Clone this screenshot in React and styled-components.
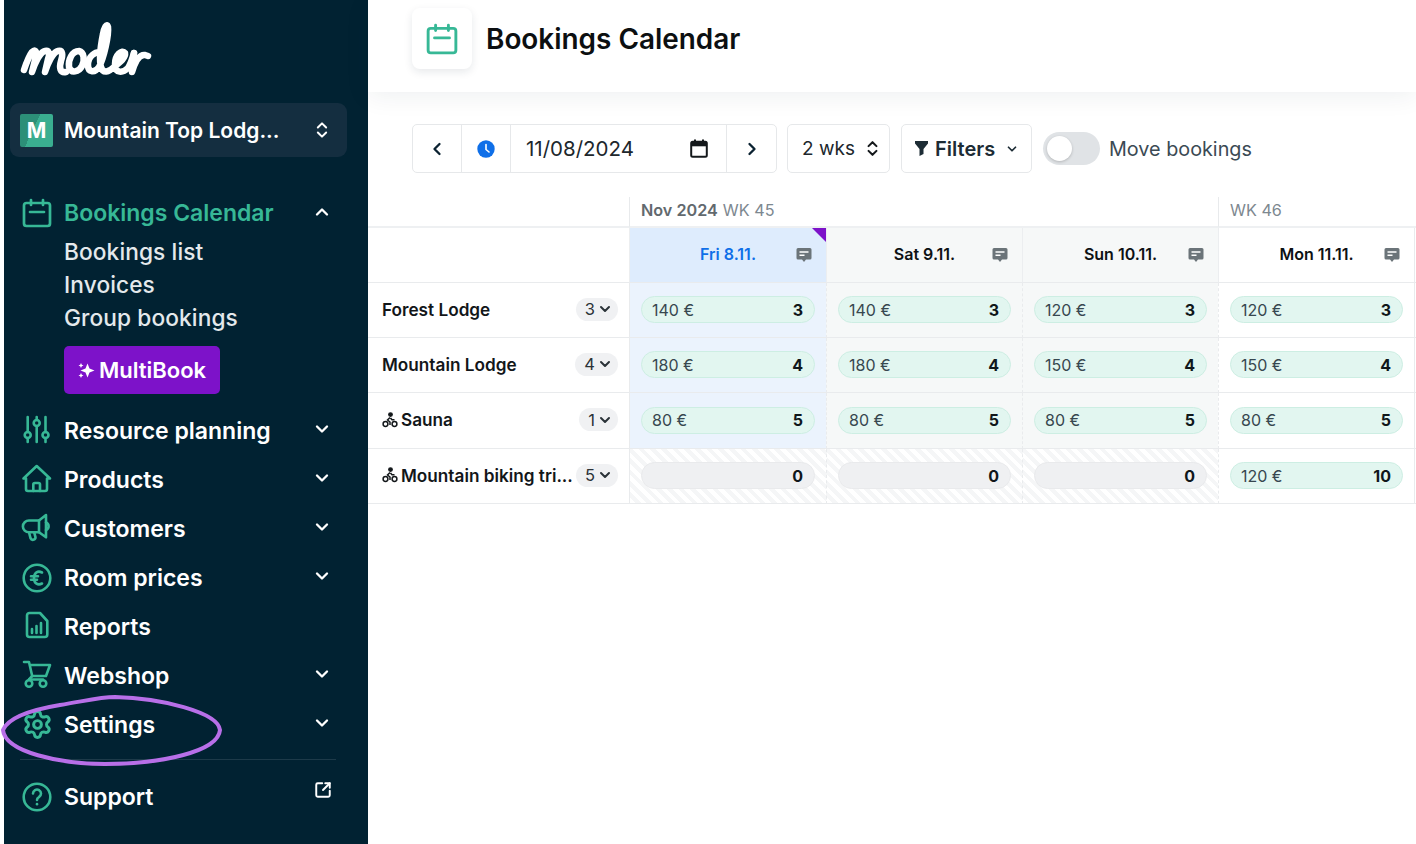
import React from "react";
import styled, { createGlobalStyle } from "styled-components";
import {
  ChevronUp, ChevronDown, ChevronLeft, ChevronRight, ChevronsUpDown, Settings, CircleHelp, SquareArrowOutUpRight,
} from "lucide-react";

const FONT = `"Inter", "Open Sans", "Liberation Sans", sans-serif`;
const GREEN = "#37b896";

const Global = createGlobalStyle`
  html, body { margin: 0; padding: 0; background: #fff; }
  body { font-family: ${FONT}; }
  * { box-sizing: border-box; }
`;

const Page = styled.div`
  position: relative;
  display: flex;
  width: 1416px;
  height: 844px;
  overflow: hidden;
  padding-left: 4px;
  background: #fff;
`;

const Sidebar = styled.aside`
  flex: 0 0 364px;
  height: 844px;
  background: #012232;
  padding: 20px 6px 0;
  display: flex;
  flex-direction: column;
  color: #fff;
`;

const LogoBox = styled.svg`
  display: block;
  margin-left: 9px;
  width: 136px;
  height: 60px;
  flex: none;
`;

const Switcher = styled.div`
  margin-top: 23px;
  height: 54px;
  width: 337px;
  border-radius: 9px;
  background: #142e40;
  display: flex;
  align-items: center;
  padding: 0 15px 0 10px;
  flex: none;
`;

const Badge = styled.div`
  width: 33px;
  height: 33px;
  border-radius: 2px;
  background: linear-gradient(115deg, #2c8f78 0 42%, #3aae90 42%);
  color: #fff;
  font-weight: 700;
  font-size: 21px;
  display: flex;
  align-items: center;
  justify-content: center;
  flex: none;
`;

const SwitcherName = styled.div`
  flex: 1;
  margin-left: 11px;
  font-size: 21px;
  font-weight: 600;
  white-space: nowrap;
`;

const Nav = styled.nav`
  margin-top: 31px;
  display: flex;
  flex-direction: column;
`;

const Item = styled.div`
  height: ${(p) => (p.$active ? 50 : 49)}px;
  display: flex;
  align-items: center;
  padding: 0 30px 0 10px;
  font-size: 23px;
  font-weight: 600;
  color: ${(p) => (p.$active ? GREEN : "#fff")};
  white-space: nowrap;
`;

const ItemIcon = styled.span`
  width: 34px;
  height: 34px;
  display: flex;
  align-items: center;
  justify-content: center;
  color: ${GREEN};
  flex: none;
`;

const ItemLabel = styled.span`
  flex: 1;
  margin-left: 10px;
`;

const Caret = styled.span`
  color: #fff;
  display: flex;
  margin-top: ${(p) => (p.$raised ? -13 : -3)}px;
`;

const SubList = styled.div`
  display: flex;
  flex-direction: column;
  padding-left: 54px;
  margin-top: -3px;
`;

const SubItem = styled.div`
  height: 33px;
  display: flex;
  align-items: center;
  font-size: 22.7px;
  font-weight: 500;
  color: #e4e9ec;
  letter-spacing: 0.1px;
`;

const MultiBook = styled.div`
  margin: 12px 0 12px 54px;
  width: 156px;
  height: 48px;
  border-radius: 5px;
  background: #7d12c9;
  display: flex;
  align-items: center;
  justify-content: center;
  gap: 4px;
  font-size: 22px;
  font-weight: 600;
  color: #fff;
`;

const Divider = styled.div`
  height: 1px;
  width: 316px;
  margin: 10px 0 12px 10px;
  background: #1d3a49;
`;

const Main = styled.main`
  flex: 1;
  min-width: 0;
  display: flex;
  flex-direction: column;
`;

const Header = styled.header`
  height: 92px;
  background: #fff;
  padding: 8px 0 0 44px;
  display: flex;
  align-items: flex-start;
  gap: 14px;
  box-shadow: 0 4px 24px rgba(20, 40, 60, 0.07);
  position: relative;
  flex: none;
`;

const HeaderIcon = styled.div`
  width: 60px;
  height: 61px;
  border-radius: 8px;
  background: #fff;
  box-shadow: 0 3px 8px rgba(20, 40, 60, 0.1);
  display: flex;
  align-items: center;
  justify-content: center;
  color: ${GREEN};
`;

const Title = styled.h1`
  margin: 13px 0 0;
  font-size: 27.9px;
  line-height: 36px;
  font-weight: 600;
  color: #0c0f11;
`;

const Toolbar = styled.div`
  margin: 32px 0 0 44px;
  display: flex;
  align-items: center;
  height: 49px;
  flex: none;
`;

const Group = styled.div`
  display: flex;
  height: 49px;
  border: 1px solid #e6e8ea;
  border-radius: 5px;
  background: #fff;
  margin-right: ${(p) => p.$mr}px;
  width: ${(p) => p.$w}px;
`;

const Cell = styled.div`
  width: ${(p) => (p.$w ? `${p.$w}px` : "auto")};
  flex: ${(p) => (p.$w ? "none" : 1)};
  display: flex;
  align-items: center;
  justify-content: ${(p) => (p.$w ? "center" : "space-between")};
  border-left: ${(p) => (p.$first ? "none" : "1px solid #e6e8ea")};
  color: #0b2231;
  padding: ${(p) => (p.$w ? 0 : "0 18px 0 15px")};
`;

const DateText = styled.span`
  font-size: 20.5px;
  color: #20272c;
  font-weight: 400;
`;

const Wks = styled.div`
  flex: 1;
  display: flex;
  align-items: center;
  justify-content: space-between;
  padding: 0 7px 0 14px;
  font-size: 19px;
  color: #20272c;
`;

const FilterBtn = styled.div`
  flex: 1;
  display: flex;
  align-items: center;
  gap: 7px;
  padding: 0 13px;
  font-size: 20px;
  font-weight: 600;
  color: #1d2c35;
`;

const Toggle = styled.div`
  width: 57px;
  height: 33px;
  border-radius: 17px;
  background: #e0e3e6;
  position: relative;
  flex: none;
  &::after {
    content: "";
    position: absolute;
    top: 4px;
    left: 4px;
    width: 25px;
    height: 25px;
    border-radius: 50%;
    background: #fff;
    box-shadow: 0 1px 3px rgba(0, 0, 0, 0.2);
  }
`;

const ToggleLabel = styled.span`
  margin-left: 9px;
  font-size: 19.8px;
  color: #3b4a54;
  white-space: nowrap;
`;

const Grid = styled.div`
  margin-top: 22px;
  display: grid;
  grid-template-columns: 261px 197px 196px 196px 196px 2px;
  grid-template-rows: 33px 55px 55px 55px 56px 55px;
`;

const WeekBlank = styled.div`
  border-bottom: 2px solid #eef0f2;
`;

const WeekCell = styled.div`
  grid-column: span ${(p) => p.$span};
  border-left: 1px solid #e8eaec;
  border-bottom: 2px solid #eef0f2;
  margin-top: 2px;
  padding: 0 0 3px 11px;
  display: flex;
  align-items: center;
  gap: 5px;
  font-size: 16.2px;
  color: #7d8890;
  b { font-weight: 600; color: #62696e; }
`;

const DayCell = styled.div`
  position: relative;
  display: flex;
  align-items: center;
  justify-content: center;
  font-size: 16px;
  font-weight: 600;
  padding-bottom: 2px;
  background: ${(p) => (p.$today ? "#deecfd" : p.$weekend ? "#f6f8f8" : "#fff")};
  color: ${(p) => (p.$today ? "#0f6fe8" : "#0d1114")};
  border-left: 1px solid #eceef0;
  border-bottom: 1px solid #e9ebed;
`;

const DayNote = styled.svg`
  position: absolute;
  right: 14px;
  top: 19px;
  width: 16px;
  height: 16px;
`;

const Corner = styled.div`
  position: absolute;
  top: 0;
  right: 0;
  width: 0;
  height: 0;
  border-top: 14px solid #7d12c9;
  border-left: 14px solid transparent;
`;

const RowLabel = styled.div`
  display: flex;
  align-items: center;
  padding: 0 11px 2px 14px;
  border-bottom: 1px solid #e9ebed;
  font-size: 17.2px;
  font-weight: 600;
  color: #121619;
  white-space: nowrap;
  gap: 3px;
`;

const RowName = styled.span`
  flex: 1;
  min-width: 0;
  overflow: hidden;
`;

const Chip = styled.span`
  height: 23px;
  padding: 0 5px 0 9px;
  border-radius: 12px;
  background: #f0f1f3;
  display: flex;
  align-items: center;
  gap: 2px;
  font-size: 16.5px;
  font-weight: 400;
  color: #2b3338;
  flex: none;
`;

const DataCell = styled.div`
  display: flex;
  align-items: center;
  padding: 0 11px 1px 11px;
  border-left: 1px ${(p) => (p.$today || p.$first ? "solid" : "dashed")} #e9ebed;
  border-bottom: 1px solid #e9ebed;
  background: ${(p) =>
    p.$off
      ? "repeating-linear-gradient(45deg, #fff 0 4px, #f5f6f7 4px 8px)"
      : p.$today
      ? "#ebf3fd"
      : p.$weekend
      ? "#f6f8f8"
      : "#fff"};
`;

const Pill = styled.div`
  flex: 1;
  height: 27px;
  border-radius: 14px;
  border: 1px solid ${(p) => (p.$off ? "#e9eaec" : "#cdeee3")};
  background: ${(p) => (p.$off ? "#eff0f2" : "#e2f6f0")};
  display: flex;
  align-items: center;
  justify-content: space-between;
  padding: 0 11px 0 10px;
  font-size: 16px;
  color: #37474f;
  b { font-weight: 700; color: #10171b; }
`;

const EndCap = styled.div`
  border-bottom: 1px solid #e9ebed;
  border-left: 1px solid #e9ebed;
`;

const Annotation = styled.svg`
  position: absolute;
  left: 0;
  top: 690px;
  width: 226px;
  height: 80px;
  pointer-events: none;
`;

const CalIcon = ({ size = 30 }) => (
  <svg width={size} height={size} viewBox="0 0 30 30" fill="none" stroke="currentColor" strokeWidth="2.7" strokeLinecap="round" strokeLinejoin="round">
    <rect x="2" y="5" width="26" height="23" rx="2.5" />
    <path d="M9 2v5M21 2v5M8 14h14" />
  </svg>
);

const IconSvg = ({ children }) => (
  <svg width="34" height="34" viewBox="0 0 34 34" fill="none" stroke="currentColor" strokeWidth="2.6" strokeLinecap="round" strokeLinejoin="round">
    {children}
  </svg>
);

const SlidersIcon = () => (
  <IconSvg>
    <path d="M7.7 3v15M7.7 24v4M16.7 3v3M16.7 12v16M25.5 3v15M25.5 24v4" />
    <circle cx="7.7" cy="21" r="3" />
    <circle cx="16.7" cy="9" r="3" />
    <circle cx="25.5" cy="21" r="3" />
  </IconSvg>
);

const HouseIcon = () => (
  <IconSvg>
    <path d="M16.7 3L3.5 15.5H6V26a2 2 0 0 0 2 2h17a2 2 0 0 0 2-2V15.500h3z" />
    <path d="M13.3 28v-6.500a1.500 1.500 0 0 1 1.500-1.500h3.700a1.500 1.500 0 0 1 1.500 1.500V28" />
  </IconSvg>
);

const MegaphoneIcon = () => (
  <IconSvg>
    <path d="M26 3l-7 5.500H9a6 5.800 0 0 0 0 11.800h10l7 5z" />
    <path d="M19 8.500v11.800M9 20.300l1.500 6a2.600 2.600 0 0 0 5-1l-1.300-5M26 10.500a4 4 0 0 1 0 7.500" />
  </IconSvg>
);

const EuroIcon = () => (
  <IconSvg>
    <circle cx="17" cy="17" r="13.3" />
    <path d="M22 11.500c-4-2.200-8-.2-8 5.500s4 7.700 8 5.500M11 15.300h7M11 18.700h6" />
  </IconSvg>
);

const ReportIcon = () => (
  <IconSvg>
    <path d="M9.5 3H20l7.3 8v13.500a2.500 2.500 0 0 1-2.500 2.500H9.500A2.500 2.500 0 0 1 7 24.500v-19A2.500 2.500 0 0 1 9.500 3z" />
    <path d="M12 23v-4M16.500 23v-7M21 23V13" />
  </IconSvg>
);

const CartIcon = () => (
  <IconSvg>
    <path d="M4 3h5l3.200 14M9.700 6H30l-4 11H12.200M9 20.500h14" />
    <circle cx="9" cy="24.500" r="3.300" />
    <circle cx="23" cy="24.500" r="3.300" />
    <path d="M12.200 17L9 20.500" />
  </IconSvg>
);

const HelpIcon = () => (
  <IconSvg>
    <circle cx="17" cy="17" r="13.3" />
    <path d="M13 13.500a4 4 0 1 1 6 3.500c-1.300.8-2 1.500-2 3" />
    <path d="M17 24v.2" />
  </IconSvg>
);

const Logo = () => (
  <LogoBox viewBox="0 0 136 60" fill="none" stroke="#fff" strokeWidth="6.5" strokeLinecap="round" strokeLinejoin="round">
    <path d="M5 50C7 44 10 36 13 32C16 29 18 31 17 36L13 52C16 43 21 32 26 31C30 30 31 34 29 39L26 52C29 43 34 32 39 31C44 30 44 35 42 41C40 48 41 53 47 52" />
    <path d="M60 31C53 31 49 40 50 47C52 54 60 52 63 46C66 40 65 32 60 31" />
    <path d="M84 33C76 30 69 37 69 45C69 53 76 53 80 47C85 38 90 15 89 7C88 2 85 8 84 14C82 24 80 40 82 47C84 54 90 52 95 47C100 43 107 38 106 33C103 29 96 35 96 44C96 54 104 53 109 48C111 45 113 40 115 33" />
    <path d="M115 33C114 40 113 46 113 52C116 42 120 34 126 35L129 36" />
  </LogoBox>
);

const Spark = () => (
  <svg width="17" height="17" viewBox="0 0 17 17" fill="#fff">
    <path d="M9.5 1.500l2 5 5 2-5 2-2 5-2-5-5-2 5-2z" />
    <path d="M3 1l.8 1.700 1.700.8-1.700.8L3 6l-.8-1.700L.5 3.500l1.700-.8zM3 11l.8 1.700 1.700.8-1.700.8L3 16l-.8-1.700-1.700-.8 1.700-.8z" />
  </svg>
);

const Note = () => (
  <DayNote viewBox="0 0 16 16">
    <path fill="#6b7479" d="M2 1h12a1.500 1.500 0 0 1 1.500 1.500V11a1.500 1.500 0 0 1-1.500 1.500h-4L8 15l-2-2.500H2A1.500 1.500 0 0 1 .5 11V2.500A1.500 1.500 0 0 1 2 1z" />
    <path stroke="#fff" strokeWidth="1.4" d="M3.500 5h9M3.500 8.200h5" />
  </DayNote>
);

const Bike = () => (
  <svg width="16" height="16" viewBox="0 0 16 16" fill="none" stroke="#14181b" strokeWidth="1.5" style={{ flex: "none" }}>
    <circle cx="3.5" cy="12" r="2.4" />
    <circle cx="12.5" cy="12" r="2.4" />
    <circle cx="8.5" cy="2.6" r="1.7" fill="#14181b" />
    <path d="M8 5.500L5.500 8 8 10v3M8.500 6l1.500 1.800h2.500" />
  </svg>
);

const FilterIcon = () => (
  <svg width="13" height="15" viewBox="0 0 13 15" fill="#1d2c35"><path d="M0 0h13v2.500L8.500 8v5L4.500 15V8L0 2.500z" /></svg>
);

const Clock = () => (
  <svg width="18" height="18" viewBox="0 0 18 18">
    <circle cx="9" cy="9" r="8.7" fill="#0f6fe8" />
    <path d="M9 4.500V9.500l3 2.500" fill="none" stroke="#fff" strokeWidth="1.6" strokeLinecap="round" />
  </svg>
);

const SmallCal = () => (
  <svg width="18" height="19" viewBox="0 0 18 19" fill="none">
    <rect x="1.2" y="2.8" width="15.6" height="15" rx="1.5" stroke="#14181b" strokeWidth="2" />
    <rect x="1.2" y="2.8" width="15.6" height="4.5" fill="#14181b" />
    <path d="M5 .5v3M13 .5v3" stroke="#14181b" strokeWidth="2" />
  </svg>
);

const NAV_TOP = [
  { label: "Resource planning", icon: <SlidersIcon />, more: true },
  { label: "Products", icon: <HouseIcon />, more: true },
  { label: "Customers", icon: <MegaphoneIcon />, more: true },
  { label: "Room prices", icon: <EuroIcon />, more: true },
  { label: "Reports", icon: <ReportIcon />, more: false },
  { label: "Webshop", icon: <CartIcon />, more: true },
  { label: "Settings", icon: <Settings size={31} strokeWidth={2.3} />, more: true },
];

const DAYS = [
  { label: "Fri 8.11.", today: true },
  { label: "Sat 9.11.", weekend: true },
  { label: "Sun 10.11.", weekend: true },
  { label: "Mon 11.11." },
];

const ROWS = [
  { name: "Forest Lodge", chip: 3, cells: [["140 €", 3], ["140 €", 3], ["120 €", 3], ["120 €", 3]] },
  { name: "Mountain Lodge", chip: 4, cells: [["180 €", 4], ["180 €", 4], ["150 €", 4], ["150 €", 4]] },
  { name: "Sauna", bike: true, chip: 1, cells: [["80 €", 5], ["80 €", 5], ["80 €", 5], ["80 €", 5]] },
  { name: "Mountain biking tri...", bike: true, chip: 5, cells: [[null, 0], [null, 0], [null, 0], ["120 €", 10]] },
];

export default function App() {
  return (
    <Page>
      <Global />
      <Sidebar>
        <Logo />
        <Switcher>
          <Badge>M</Badge>
          <SwitcherName>Mountain Top Lodg...</SwitcherName>
          <ChevronsUpDown size={20} strokeWidth={2.4} />
        </Switcher>
        <Nav>
          <Item $active>
            <ItemIcon><CalIcon /></ItemIcon>
            <ItemLabel>Bookings Calendar</ItemLabel>
            <Caret><ChevronUp size={20} strokeWidth={2.8} /></Caret>
          </Item>
          <SubList>
            <SubItem>Bookings list</SubItem>
            <SubItem>Invoices</SubItem>
            <SubItem>Group bookings</SubItem>
          </SubList>
          <MultiBook><Spark />MultiBook</MultiBook>
          {NAV_TOP.map((n) => (
            <Item key={n.label}>
              <ItemIcon>{n.icon}</ItemIcon>
              <ItemLabel>{n.label}</ItemLabel>
              {n.more && <Caret><ChevronDown size={20} strokeWidth={2.8} /></Caret>}
            </Item>
          ))}
          <Divider />
          <Item>
            <ItemIcon><HelpIcon /></ItemIcon>
            <ItemLabel>Support</ItemLabel>
            <Caret $raised><SquareArrowOutUpRight size={18} strokeWidth={2.6} /></Caret>
          </Item>
        </Nav>
      </Sidebar>
      <Main>
        <Header>
          <HeaderIcon><CalIcon size={32} /></HeaderIcon>
          <Title>Bookings Calendar</Title>
        </Header>
        <Toolbar>
          <Group $mr={10} $w={365}>
            <Cell $first $w={48}><ChevronLeft size={20} strokeWidth={2.8} /></Cell>
            <Cell $w={49}><Clock /></Cell>
            <Cell><DateText>11/08/2024</DateText><SmallCal /></Cell>
            <Cell $w={50}><ChevronRight size={20} strokeWidth={2.8} /></Cell>
          </Group>
          <Group $mr={11} $w={103}>
            <Wks>2 wks<ChevronsUpDown size={19} strokeWidth={2.6} color="#14181b" /></Wks>
          </Group>
          <Group $mr={11} $w={131}>
            <FilterBtn><FilterIcon />Filters<ChevronDown size={14} strokeWidth={3} style={{ marginLeft: 3 }} /></FilterBtn>
          </Group>
          <Toggle />
          <ToggleLabel>Move bookings</ToggleLabel>
        </Toolbar>
        <Grid>
          <WeekBlank />
          <WeekCell $span={3}><b>Nov 2024</b> WK 45</WeekCell>
          <WeekCell $span={2}>WK 46</WeekCell>
          <RowLabel />
          {DAYS.map((d) => (
            <DayCell key={d.label} $today={d.today} $weekend={d.weekend}>
              {d.label}
              {d.today && <Corner />}
              <Note />
            </DayCell>
          ))}
          <EndCap />
          {ROWS.map((r) => (
            <React.Fragment key={r.name}>
              <RowLabel>
                {r.bike && <Bike />}
                <RowName>{r.name}</RowName>
                <Chip>{r.chip}<ChevronDown size={16} strokeWidth={3} /></Chip>
              </RowLabel>
              {r.cells.map(([price, count], i) => (
                <DataCell key={i} $first={i === 0} $today={DAYS[i].today} $weekend={DAYS[i].weekend} $off={!price}>
                  <Pill $off={!price}><span>{price}</span><b>{count}</b></Pill>
                </DataCell>
              ))}
              <EndCap />
            </React.Fragment>
          ))}
        </Grid>
      </Main>
      <Annotation viewBox="0 690 226 80" fill="none">
        <path d="M3 730C8 718 30 710 60 705C85 701 100 697 115 697C160 698 218 712 220 730C218 752 160 764 105 764C60 764 5 752 3 730Z" stroke="#b86fe8" strokeWidth="4" />
      </Annotation>
    </Page>
  );
}
